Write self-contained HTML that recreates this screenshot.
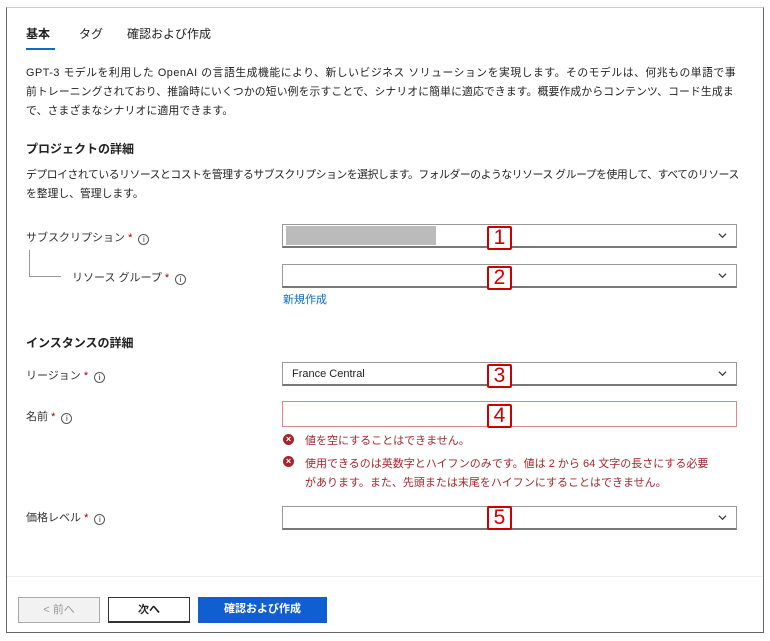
<!DOCTYPE html>
<html><head><meta charset="utf-8"><style>
*{margin:0;padding:0;box-sizing:border-box}
body{width:770px;height:641px;background:#fff;position:relative;overflow:hidden;font-family:"Liberation Sans","Noto Sans CJK JP",sans-serif;color:#222;font-size:11px}
.a{position:absolute;white-space:nowrap}
.frame{position:absolute;left:6px;top:7px;width:758px;height:626px;border:1px solid #666;border-top-color:#ccc}
.dd{position:absolute;left:282px;width:455px;height:24px;border:1px solid #999;border-bottom:2px solid #777;background:#fff}
.chev{position:absolute;right:9px;top:6px;width:9px;height:9px}
.num{position:absolute;left:487px;width:25px;height:24px;border:2px solid #c00;border-radius:2px;color:#c00;font-size:21px;line-height:20px;text-align:center;background:#fff}
.lbl{font-size:11px;color:#333}
.req{color:#a00}
.info{display:inline-block;width:11px;height:11px;border:1px solid #555;border-radius:50%;font-size:8px;line-height:9px;text-align:center;margin-left:6px;vertical-align:-1px}
.err{color:#a4262c;font-size:11px}
.ei{position:absolute;width:11px;height:11px;border-radius:50%;background:#a4262c;color:#fff;font-size:9px;line-height:11px;text-align:center;font-weight:bold}
.btn{position:absolute;top:597px;height:26px;font-size:11px;text-align:center;line-height:24px}
.p{font-size:10.8px}
</style></head><body>
<div class="frame"></div>
<div class="a" style="left:26px;top:25px;font-size:12px;font-weight:bold">基本</div>
<div class="a" style="left:26px;top:48px;width:29px;height:2px;background:#0f6cbd"></div>
<div class="a" style="left:79px;top:25px;font-size:12px">タグ</div>
<div class="a" style="left:127px;top:25px;font-size:12px">確認および作成</div>
<div class="a p" style="left:26px;top:64px;letter-spacing:0.55px">GPT-3 モデルを利用した OpenAI の言語生成機能により、新しいビジネス ソリューションを実現します。そのモデルは、何兆もの単語で事</div>
<div class="a p" style="left:26px;top:83px;letter-spacing:0.15px">前トレーニングされており、推論時にいくつかの短い例を示すことで、シナリオに簡単に適応できます。概要作成からコンテンツ、コード生成ま</div>
<div class="a p" style="left:26px;top:102px;letter-spacing:0.2px">で、さまざまなシナリオに適用できます。</div>
<div class="a" style="left:26px;top:140px;font-size:12px;font-weight:bold">プロジェクトの詳細</div>
<div class="a p" style="left:26px;top:166px;letter-spacing:-0.42px">デプロイされているリソースとコストを管理するサブスクリプションを選択します。フォルダーのようなリソース グループを使用して、すべてのリソース</div>
<div class="a p" style="left:26px;top:185px">を整理し、管理します。</div>

<div class="a lbl" style="left:26px;top:229px">サブスクリプション <span class="req">*</span><span class="info">i</span></div>
<div class="a" style="left:29px;top:250px;width:1px;height:26px;background:#999"></div>
<div class="a" style="left:29px;top:276px;width:32px;height:1px;background:#999"></div>
<div class="a lbl" style="left:72px;top:269px">リソース グループ <span class="req">*</span><span class="info">i</span></div>

<div class="dd" style="top:224px"><div style="position:absolute;left:3px;top:1px;width:150px;height:19px;background:#bbb"></div><svg class="chev" viewBox="0 0 10 10"><path d="M1 3l4 4 4-4" fill="none" stroke="#333" stroke-width="1.3"/></svg></div>
<div class="num" style="top:226px">1</div>
<div class="dd" style="top:264px"><svg class="chev" viewBox="0 0 10 10"><path d="M1 3l4 4 4-4" fill="none" stroke="#333" stroke-width="1.3"/></svg></div>
<div class="num" style="top:266px">2</div>
<div class="a" style="left:283px;top:291px;color:#0f6cbd;font-size:11px">新規作成</div>

<div class="a" style="left:26px;top:334px;font-size:12px;font-weight:bold">インスタンスの詳細</div>
<div class="a lbl" style="left:26px;top:367px">リージョン <span class="req">*</span><span class="info">i</span></div>
<div class="dd" style="top:362px"><div class="a" style="left:9px;top:5px;font-size:11px">France Central</div><svg class="chev" viewBox="0 0 10 10"><path d="M1 3l4 4 4-4" fill="none" stroke="#333" stroke-width="1.3"/></svg></div>
<div class="num" style="top:364px">3</div>

<div class="a lbl" style="left:26px;top:408px">名前 <span class="req">*</span><span class="info">i</span></div>
<div class="dd" style="top:401px;height:26px;border:1px solid #d88;"></div>
<div class="num" style="top:404px">4</div>
<div class="ei" style="left:283px;top:434px">×</div>
<div class="a err" style="left:305px;top:432px">値を空にすることはできません。</div>
<div class="ei" style="left:283px;top:456px">×</div>
<div class="a err" style="left:305px;top:455px;line-height:19px">使用できるのは英数字とハイフンのみです。値は 2 から 64 文字の長さにする必要<br>があります。また、先頭または末尾をハイフンにすることはできません。</div>

<div class="a lbl" style="left:26px;top:509px">価格レベル <span class="req">*</span><span class="info">i</span></div>
<div class="dd" style="top:506px"><svg class="chev" viewBox="0 0 10 10"><path d="M1 3l4 4 4-4" fill="none" stroke="#333" stroke-width="1.3"/></svg></div>
<div class="num" style="top:506px">5</div>

<div class="a" style="left:7px;top:576px;width:756px;height:1px;background:#eee"></div>
<div class="btn" style="left:18px;width:82px;border:1px solid #aaa;background:#f2f2f2;color:#999">&lt; 前へ</div>
<div class="btn" style="left:108px;width:82px;border:1px solid #333;border-bottom-width:2px;background:#fff;font-weight:bold">次へ</div>
<div class="btn" style="left:198px;width:129px;background:#0f5fd0;color:#fff;font-weight:bold">確認および作成</div>
</body></html>
